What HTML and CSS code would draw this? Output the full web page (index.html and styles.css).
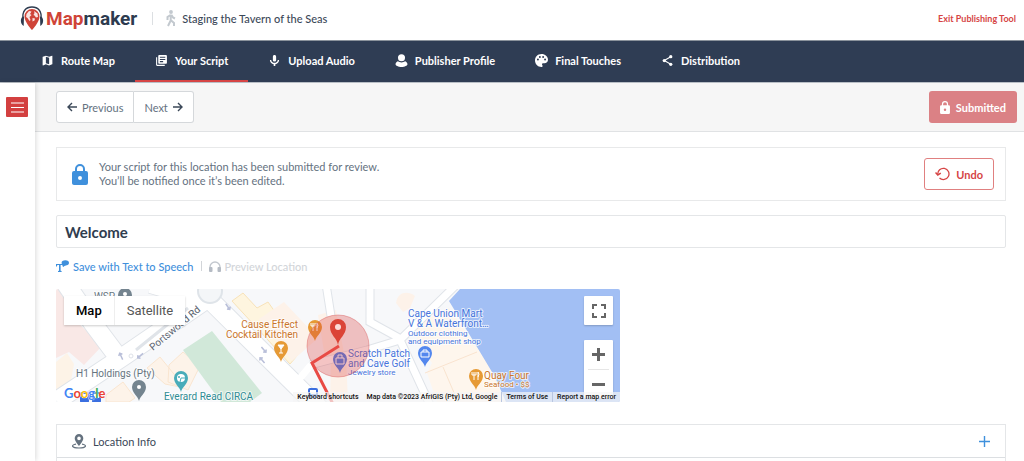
FILE: index.html
```html
<!DOCTYPE html>
<html lang="en">
<head>
    <meta charset="UTF-8">
    <meta name="viewport" content="width=device-width, initial-scale=1.0">
    <title>Mapmaker - Your Script</title>
    <link rel="stylesheet" href="styles.css">
</head>
<body>
    <header class="header">
        <a class="logo" href="#">
            <svg width="24" height="25" viewBox="0 0 24 25" aria-hidden="true">
                <path d="M3 13C2 5 6 1 12 1s10 4 9 12" fill="none" stroke="#2d3b4f" stroke-width="1.3"/>
                <path d="M4 10.500C0 10.500-.3 18 3.700 20zM20 10.500c4 0 4.300 7.500.300 9.500z" fill="#2d3b4f"/>
                <path d="M12 3a7.500 7.500 0 0 0-7.500 7.700C4.500 16 12 24 12 24s7.500-8 7.500-13.300A7.500 7.500 0 0 0 12 3z" fill="#cf4438"/>
                <path d="M6.500 8 9 5l2.500.5L10 8l1.500 1-2 2 1 3-1 1-2-3-1.500-1zM14 5l3.500 2.500L18 11l-2 .5-1.500-2-1-.5 1-2zM12.500 12l2.500.5-.5 2-2 1z" fill="#fff" opacity=".85"/>
            </svg>
            <span class="logo-text"><span class="logo-red">Map</span>maker</span>
        </a>
        <span class="header-sep"></span>
        <svg class="walker" width="10" height="17" viewBox="0 0 10 17" aria-hidden="true">
            <circle cx="5" cy="2" r="1.900" fill="#c3c9cf"/>
            <path d="M4.700 4.500v6L2 16M5.200 10.500 8 13v3M4.500 5 1.500 7v3M5.500 5 7 7.500l2 1" fill="none" stroke="#c3c9cf" stroke-width="2"/>
        </svg>
        <span class="tour-name">Staging the Tavern of the Seas</span>
        <a class="exit" href="#">Exit Publishing Tool</a>
    </header>

    <nav class="tabs">
        <a class="tab" href="#">
            <svg viewBox="0 0 24 24"><path d="M20.500 3l-.2 0L15 5.100 9 3 3.400 4.900c-.2.100-.4.300-.4.500v15.100c0 .3.200.5.500.5l.2 0L9 18.900l6 2.100 5.600-1.900c.2-.1.400-.3.400-.5V3.500c0-.3-.2-.5-.5-.5zM15 19l-6-2.100V5l6 2.100V19z"/></svg>
            Route Map
        </a>
        <a class="tab active" href="#">
            <svg viewBox="0 0 24 24"><path d="M4 6H2v14c0 1.100.9 2 2 2h14v-2H4V6zm16-4H8c-1.100 0-2 .9-2 2v12c0 1.100.9 2 2 2h12c1.100 0 2-.9 2-2V4c0-1.100-.9-2-2-2zm-1 9H9V9h10v2zm-4 4H9v-2h6v2zm4-8H9V5h10v2z"/></svg>
            Your Script
        </a>
        <a class="tab" href="#">
            <svg viewBox="0 0 24 24"><path d="M12 14c1.700 0 3-1.300 3-3V5c0-1.700-1.300-3-3-3S9 3.300 9 5v6c0 1.700 1.300 3 3 3zm6-3h2.500c0 4-3 7-7 7.700V22h-3v-3.300c-4-.7-7-3.700-7-7.700H6c0 3 3 5.300 6 5.300s6-2.300 6-5.300z"/></svg>
            Upload Audio
        </a>
        <a class="tab" href="#">
            <svg viewBox="0 0 24 24"><circle cx="12" cy="7" r="6.500"/><path d="M5 13.500c4 2.800 10 2.800 14 0 3 1.500 4 3.500 4 5.500 0 2.500-5 5-11 5S1 21.500 1 19c0-2 1-4 4-5.500z"/></svg>
            Publisher Profile
        </a>
        <a class="tab" href="#">
            <svg viewBox="2 2 20 20"><path d="M12 2C6 2 2 6.500 2 12s4.500 10 10 10c1 0 1.700-.8 1.700-1.700 0-.4-.2-.8-.4-1.100-.3-.3-.5-.7-.5-1.100 0-1 .8-1.700 1.700-1.700h2c3 0 5.500-2.500 5.500-5.500C22 5.900 17.500 2 12 2zM6.500 12a1.500 1.500 0 1 1 0-3 1.500 1.500 0 0 1 0 3zm3-4a1.500 1.500 0 1 1 0-3 1.500 1.500 0 0 1 0 3zm5 0a1.500 1.500 0 1 1 0-3 1.500 1.500 0 0 1 0 3zm3 4a1.500 1.500 0 1 1 0-3 1.500 1.500 0 0 1 0 3z"/></svg>
            Final Touches
        </a>
        <a class="tab" href="#">
            <svg viewBox="0 0 24 24"><path d="M18 5 6 12l12 7" fill="none" stroke="#fff" stroke-width="2"/><circle cx="18" cy="5" r="3"/><circle cx="6" cy="12" r="3"/><circle cx="18" cy="19" r="3"/></svg>
            Distribution
        </a>
    </nav>

    <div class="layout">
        <aside class="sidebar">
            <button class="menu-btn" aria-label="Open menu">
                <svg width="13" height="11" viewBox="0 0 13 11"><path d="M0 1h13M0 5.500h13M0 10h13" stroke="#fff" stroke-width="1.200"/></svg>
            </button>
        </aside>

        <main class="main">
            <div class="toolbar">
                <div class="pager">
                    <button class="pager-btn">
                        <svg width="10" height="10" viewBox="0 0 10 10"><path d="M10 5H1M5 1 1 5l4 4" fill="none" stroke="#3b4858" stroke-width="1.400"/></svg>
                        Previous
                    </button>
                    <button class="pager-btn">
                        Next
                        <svg width="10" height="10" viewBox="0 0 10 10"><path d="M0 5h9M5 1l4 4-4 4" fill="none" stroke="#3b4858" stroke-width="1.400"/></svg>
                    </button>
                </div>
                <button class="submitted" disabled>
                    <svg width="10" height="13" viewBox="0 0 16 21"><path d="M14 7h-1V5A5 5 0 0 0 3 5v2H2a2 2 0 0 0-2 2v10c0 1.100.9 2 2 2h12a2 2 0 0 0 2-2V9a2 2 0 0 0-2-2zm-6 9a2 2 0 1 1 0-4 2 2 0 0 1 0 4zm3-9H5V5a3 3 0 0 1 6 0v2z" fill="#fff"/></svg>
                    Submitted
                </button>
            </div>

            <div class="content">
                <section class="notice">
                    <svg width="16" height="21" viewBox="0 0 16 21"><path d="M14 7h-1V5A5 5 0 0 0 3 5v2H2a2 2 0 0 0-2 2v10c0 1.100.9 2 2 2h12a2 2 0 0 0 2-2V9a2 2 0 0 0-2-2zm-6 9a2 2 0 1 1 0-4 2 2 0 0 1 0 4zm3-9H5V5a3 3 0 0 1 6 0v2z" fill="#3f90dc"/></svg>
                    <p class="notice-text">Your script for this location has been submitted for review.<br>You’ll be notified once it’s been edited.</p>
                    <button class="undo">
                        <svg width="15" height="14" viewBox="0 0 15 14"><path d="M2.800 7.500a5.600 5.600 0 1 1 1.700 3.500" fill="none" stroke="#d64545" stroke-width="1.300"/><path d="M.5 5.500 2.800 8l3-1.800" fill="none" stroke="#d64545" stroke-width="1.500"/></svg>
                        Undo
                    </button>
                </section>

                <input class="title-input" type="text" value="Welcome" aria-label="Location title">

                <div class="actions">
                    <button class="action">
                        <svg width="13" height="12" viewBox="0 0 13 12"><path d="M0 4h7.500v2.500H6.700L6.300 5H4.600v5.800l1 .2v1H2v-1l1-.2V5H1.300L.9 6.500H0z" fill="#3f90dc"/><ellipse cx="9.300" cy="2.800" rx="3.700" ry="2.600" fill="#3f90dc"/><path d="M7 4v3l3-2z" fill="#3f90dc"/></svg>
                        Save with Text to Speech
                    </button>
                    <span class="action-sep"></span>
                    <button class="action muted" disabled>
                        <svg width="12" height="11" viewBox="0 0 12 11"><path d="M1 9V6a5 5 0 0 1 10 0v3" fill="none" stroke="#c2c7ce" stroke-width="1.300"/><rect y="6" width="3.500" height="5" rx="1" fill="#b5bbc4"/><rect x="8.500" y="6" width="3.500" height="5" rx="1" fill="#b5bbc4"/></svg>
                        Preview Location
                    </button>
                </div>

                <div class="map">
                    <svg class="map-canvas" viewBox="0 0 564 113" preserveAspectRatio="xMinYMin slice">
                        <defs>
                            <path id="pin" d="M0 0C-1-5-7-8-7-14a7 7 0 0 1 14 0C7-8 1-5 0 0z"/>
                            <path id="arrow" d="M0 4V-3M-2-1l2-2 2 2" fill="none" stroke="#b9bfd9" stroke-width="1.500"/>
                        </defs>
                        <rect width="564" height="113" fill="#f7f8fa"/>

                        <!-- buildings and areas -->
                        <path d="M0 0h8l10 30 28 27-18 19-15-13-13 6z" fill="#f9e8e6"/>
                        <path d="M0 73l11-9 7 11-3 17-15 9z" fill="#fdf3e7"/>
                        <path d="M91 79l13-11 18 22 2 8-15-3zM113 76l14-13 17 14-12 24-20-8zM50 106l17-13 12 16-6 4H50z" fill="#fdf3e9" stroke="#f9e5d0"/>
                        <path d="M127 61l29-19 50 62-12 9h-29z" fill="#d1e8d9"/>
                        <path d="M176 12l11-8 14 15 11-6 34 48-12 14z" fill="#fef5df" stroke="#f7e2b8"/>
                        <path d="M203 30l25-17 34 36-26 23zM262 26l18-5 8 43-19 5zM275 68l15-2 2 47h-18z" fill="#fdf2e9"/>
                        <path d="M340 14c2-12 12-12 19-7l-5 12-7 4z" fill="#fdf2e9"/>
                        <path d="M361 35l32-16 32 45 16 24 5 25h-65l-10-29 5-10-15-22z" fill="#fef6ed"/>
                        <path d="M369 84l52-21M387 78l15 35" stroke="#f9e3cf" fill="none"/>
                        <path d="M404 0l-11 12 31 51 15 25 11 25h114V0z" fill="#a2bff4"/>

                        <!-- roads: grey edge, white body -->
                        <g fill="none" stroke="#e0e4e9">
                            <path d="M-10 119 68 67 154 8M10-5 38 36l30 40M150 7l114 113M95-5l55 16" stroke-width="20"/>
                            <path d="M314-5v38l31 17M254 76l57-15 33-10 55-54M344 51l30 65M270-5l5 32" stroke-width="9"/>
                        </g>
                        <g fill="none" stroke="#fff">
                            <path d="M-10 119 68 67 154 8M10-5 38 36l30 40M150 7l114 113M95-5l55 16" stroke-width="18"/>
                            <path d="M314-5v38l31 17M254 76l57-15 33-10 55-54M344 51l30 65M270-5l5 32M235 100l20-24" stroke-width="7"/>
                        </g>
                        <circle cx="154" cy="2" r="12" fill="#f4f6f8" stroke="#dfe4e9" stroke-width="2"/>
                        <path d="M80 61 132 19" stroke="#e0e4e9" stroke-width="3"/>
                        <circle cx="75" cy="67" r="2" fill="none" stroke="#dde1e8"/>
                        <use href="#arrow" transform="translate(65 67) rotate(-25)"/>
                        <use href="#arrow" transform="translate(84 67) rotate(-130)"/>
                        <use href="#arrow" transform="translate(172 18) rotate(145)"/>
                        <use href="#arrow" transform="translate(208 61) rotate(140)"/>
                        <use href="#arrow" transform="translate(206 71) rotate(-40)"/>

                        <!-- transit stops -->
                        <g fill="#3b6fe0">
                            <rect x="24" y="103" width="9" height="11" rx="2"/>
                            <rect x="36" y="103" width="9" height="11" rx="2"/>
                            <rect x="252" y="99" width="10" height="10" rx="2"/>
                        </g>
                        <path d="M26 105h5v4h-5zM38 105h5v4h-5zM254 101h6v4h-6z" fill="#fff"/>

                        <g class="label big">
                            <text x="38" y="11" fill="#66757f">WSP</text>
                            <text x="20" y="88" fill="#66757f">H1 Holdings (Pty)</text>
                            <text x="108" y="111" fill="#2f8c94">Everard Read CIRCA</text>
                            <text x="242" y="39" text-anchor="end" fill="#ca762b">Cause Effect</text>
                            <text x="242" y="49" text-anchor="end" fill="#ca762b">Cocktail Kitchen</text>
                            <text x="292" y="68" fill="#4775dc">Scratch Patch</text>
                            <text x="292" y="78" fill="#4775dc">and Cave Golf</text>
                            <text x="352" y="28" fill="#4775dc">Cape Union Mart</text>
                            <text x="352" y="38" fill="#4775dc">V &amp; A Waterfront…</text>
                            <text x="428" y="90" fill="#ca762b">Quay Four</text>
                            <text transform="translate(97 62) rotate(-40)" fill="#5b6470">Portswood Rd</text>
                        </g>
                        <g class="label small">
                            <text x="292" y="86" fill="#4775dc">Jewelry store</text>
                            <text x="352" y="47" fill="#4775dc">Outdoor clothing</text>
                            <text x="352" y="55" fill="#4775dc">and equipment shop</text>
                            <text x="428" y="98" fill="#ca762b">Seafood • $$</text>
                        </g>

                        <!-- places -->
                        <g class="place">
                            <use href="#pin" x="69" y="20" fill="#74848f"/><circle cx="69" cy="5" r="2" fill="#fff"/>
                            <use href="#pin" x="83" y="112" fill="#74848f"/><circle cx="83" cy="98" r="2" fill="#fff"/>
                            <use href="#pin" x="125" y="103" fill="#49acb9"/><circle cx="125" cy="89" r="4" fill="#fff"/><path d="M124 93l1-4h4" stroke="#49acb9" fill="none"/><circle cx="123" cy="88" r="1" fill="#49acb9"/>
                            <use href="#pin" x="225" y="73" fill="#e69a35"/><path d="M222 56h6l-3 4zM225 60v4m-2 0h4" stroke="#fff" fill="#fff"/>
                            <use href="#pin" x="259" y="52" fill="#e69a35"/><path d="M257 34v8M255 34v3h4v-3M261 34v8m0-8q2 2 0 5" stroke="#fff" fill="none"/>
                            <use href="#pin" x="284" y="84" fill="#4a7fe8"/><path d="M280 69h8v6h-8zM282 69v-3h4v3" stroke="#fff" fill="none"/>
                            <use href="#pin" x="369" y="78" fill="#5387ee"/><path d="M365 63h8v5h-8zM367 63v-2h4v2" stroke="#fff" fill="none"/>
                            <use href="#pin" x="420" y="101" fill="#e69a35"/><path d="M418 83v8M416 83v3h4v-3M422 83v8m0-8q2 2 0 5" stroke="#fff" fill="none"/>
                        </g>

                        <!-- tour location -->
                        <circle cx="282" cy="57" r="31" fill="#dc3c3c" fill-opacity=".3" stroke="#d65353" stroke-opacity=".4"/>
                        <path d="M283 57 256 74 278 117" fill="none" stroke="#e84b46" stroke-width="3"/>
                        <path d="M282 56C281 49 274 46 274 38a8 8 0 0 1 16 0C290 46 283 49 282 56z" fill="#db4437"/>
                        <circle cx="282" cy="38" r="3" fill="#fbdcd8"/>
                    </svg>

                    <div class="map-type">
                        <button class="map-type-btn selected">Map</button>
                        <button class="map-type-btn">Satellite</button>
                    </div>
                    <button class="map-full" aria-label="Toggle fullscreen">
                        <svg width="14" height="14" viewBox="0 0 14 14"><path d="M1 5V1h4M9 1h4v4M13 9v4H9M5 13H1V9" fill="none" stroke="#666" stroke-width="2"/></svg>
                    </button>
                    <div class="map-zoom">
                        <button class="zoom-btn" aria-label="Zoom in"><svg width="13" height="13" viewBox="0 0 13 13"><path d="M0 6.500h13M6.500 0v13" stroke="#666" stroke-width="3"/></svg></button>
                        <button class="zoom-btn" aria-label="Zoom out"><svg width="13" height="13" viewBox="0 0 13 13"><path d="M0 6.500h13" stroke="#666" stroke-width="3"/></svg></button>
                    </div>
                    <span class="google"><span class="g-blue">G</span><span class="g-red">o</span><span class="g-yellow">o</span><span class="g-blue">g</span><span class="g-green">l</span><span class="g-red">e</span></span>
                    <div class="map-footer">
                        <button class="map-credit">Keyboard shortcuts</button>
                        <span class="map-credit">Map data ©2023 AfriGIS (Pty) Ltd, Google</span>
                        <a class="map-credit" href="#">Terms of Use</a>
                        <a class="map-credit" href="#">Report a map error</a>
                    </div>
                </div>

                <div class="accordion">
                    <button class="accordion-row">
                        <svg width="14" height="15" viewBox="0 0 14 15"><path d="M7 0a4.300 4.300 0 0 0-4.300 4.300C2.700 7.500 7 12 7 12s4.300-4.500 4.300-7.700A4.300 4.300 0 0 0 7 0zm0 6.200a1.800 1.800 0 1 1 0-3.600 1.800 1.800 0 0 1 0 3.600z" fill="#65727f"/><path d="M4 10.200C-1.500 11-.5 14 7 14s8.500-3 3-3.800" fill="none" stroke="#65727f" stroke-width="1.200"/></svg>
                        Location Info
                        <svg class="plus" width="11" height="11" viewBox="0 0 11 11"><path d="M0 5.500h11M5.500 0v11" stroke="#3f90dc" stroke-width="1.400"/></svg>
                    </button>
                    <div class="accordion-row"></div>
                </div>
            </div>
        </main>
    </div>
</body>
</html>
```
FILE: styles.css
```css
* {
    box-sizing: border-box;
}
body {
    margin: 0;
    height: 100vh;
    display: flex;
    flex-direction: column;
    overflow: hidden;
    background: #fff;
    color: #3b4858;
    font-family: Lato, sans-serif;
    font-size: 11px;
}
a {
    color: inherit;
    text-decoration: none;
}
button {
    font: inherit;
    color: inherit;
    background: none;
    border: 0;
    padding: 0;
    cursor: pointer;
}
svg {
    flex: none;
}

/* Header */
.header {
    display: flex;
    align-items: center;
    height: 41px;
    padding: 0 8px 3px 20px;
    border-bottom: 1px solid #8b939c;
    flex: none;
}
.logo {
    display: flex;
    align-items: center;
    gap: 2px;
}
.logo-text {
    font-family: Roboto, sans-serif;
    font-size: 19px;
    line-height: 24px;
    font-weight: 700;
    color: #2d3b4f;
}
.logo-red {
    color: #cf4438;
}
.header-sep {
    width: 1px;
    height: 13px;
    margin: 0 13px 0 15px;
    background: #dcdfe2;
}
.tour-name {
    margin-left: 6px;
    font-weight: 500;
}
.exit {
    margin-left: auto;
    font-size: 9px;
    font-weight: 700;
    color: #d64545;
}

/* Navigation */
.tabs {
    display: flex;
    height: 42px;
    padding-left: 21px;
    background: #2f3d54;
    border-bottom: 1px solid #b9bfc6;
    flex: none;
}
.tab {
    display: flex;
    align-items: center;
    gap: 7px;
    padding: 0 20px;
    color: #fff;
    font-weight: 700;
    border-bottom: 2px solid transparent;
}
.tab svg {
    width: 13px;
    height: 13px;
    fill: #fff;
}
.tab.active {
    border-bottom-color: #d64545;
}

.layout {
    display: flex;
    flex: 1;
    min-height: 0;
}
.sidebar {
    width: 35px;
    flex: none;
    padding: 14px 6px;
    background: #fff;
    box-shadow: 1px 0 5px rgba(0, 0, 0, 0.15);
    z-index: 1;
}
.menu-btn {
    display: flex;
    align-items: center;
    justify-content: center;
    width: 22px;
    height: 20px;
    border-radius: 1px;
    background: #d34040;
}
.main {
    flex: 1;
    min-width: 0;
    overflow: hidden;
}

/* Toolbar */
.toolbar {
    display: flex;
    justify-content: space-between;
    align-items: center;
    height: 49px;
    padding: 0 7px 0 21px;
    background: #f6f6f6;
    border-bottom: 1px solid #e0e2e4;
}
.pager {
    display: flex;
}
.pager-btn {
    display: flex;
    align-items: center;
    gap: 5px;
    height: 32px;
    padding: 0 10px;
    background: #fff;
    border: 1px solid #d5d8db;
    color: #65727f;
}
.pager-btn:first-child {
    border-radius: 3px 0 0 3px;
}
.pager-btn:last-child {
    border-left: 0;
    border-radius: 0 3px 3px 0;
}
.submitted {
    display: flex;
    align-items: center;
    gap: 6px;
    height: 32px;
    padding: 0 11px;
    border-radius: 3px;
    background: #db8185;
    color: #fff;
    font-weight: 700;
}

.content {
    padding: 15px 18px 0 21px;
}

/* Submission notice */
.notice {
    display: flex;
    align-items: center;
    gap: 11px;
    height: 54px;
    padding: 0 11px 0 15px;
    border: 1px solid #e8e9ea;
}
.notice-text {
    margin: 0;
    line-height: 14px;
    color: #65727f;
}
.undo {
    display: flex;
    align-items: center;
    gap: 6px;
    height: 32px;
    margin-left: auto;
    padding: 0 10px;
    border: 1px solid #e08080;
    border-radius: 3px;
    color: #d64545;
    font-weight: 700;
}

.title-input {
    display: block;
    width: 100%;
    height: 33px;
    margin-top: 14px;
    padding: 0 8px;
    border: 1px solid #e4e6e8;
    border-radius: 2px;
    font: 700 15px Lato, sans-serif;
    color: #2f3d4f;
}

.actions {
    display: flex;
    align-items: center;
    height: 14px;
    margin-top: 11px;
}
.action {
    display: flex;
    align-items: center;
    gap: 4px;
    color: #3f90dc;
    font-weight: 500;
}
.action.muted {
    color: #d2d5d9;
}
.action-sep {
    width: 1px;
    height: 10px;
    margin: 0 7px;
    background: #d2d5d9;
}

/* Map */
.map {
    position: relative;
    max-width: 564px;
    height: 113px;
    margin-top: 16px;
    overflow: hidden;
    border-radius: 2px;
    font-family: Roboto, sans-serif;
}
.map-canvas {
    display: block;
    width: 100%;
    height: 100%;
}
.label text {
    stroke: #fff;
    stroke-width: 2px;
    stroke-linejoin: round;
    stroke-opacity: 0.7;
    paint-order: stroke;
}
.big {
    font-size: 10px;
}
.small {
    font-size: 8px;
}
.map-type {
    position: absolute;
    top: 7px;
    left: 8px;
    display: flex;
    background: #fff;
    box-shadow: 0 1px 2px rgba(0, 0, 0, 0.2);
}
.map-type-btn {
    height: 29px;
    padding: 0 12px;
    font-size: 13px;
    color: #565656;
}
.map-type-btn.selected {
    color: #000;
    font-weight: 500;
    border-right: 1px solid #eee;
}
.map-full,
.map-zoom {
    position: absolute;
    right: 7px;
    width: 29px;
    background: #fff;
    border-radius: 1px;
    box-shadow: 0 1px 2px rgba(0, 0, 0, 0.2);
}
.map-full {
    top: 7px;
    height: 29px;
    display: flex;
    align-items: center;
    justify-content: center;
}
.map-zoom {
    top: 51px;
}
.zoom-btn {
    display: flex;
    align-items: center;
    justify-content: center;
    width: 21px;
    height: 29px;
    margin: 0 4px;
}
.zoom-btn + .zoom-btn {
    border-top: 1px solid #e6e6e6;
}
.google {
    position: absolute;
    left: 8px;
    bottom: 1px;
    font-family: Lato, sans-serif;
    font-size: 13px;
    line-height: 16px;
    font-weight: 700;
    text-shadow: 0 0 1px #fff, 0 0 1px #fff;
}
.g-blue {
    color: #4285f4;
}
.g-red {
    color: #ea4335;
}
.g-yellow {
    color: #fbbc05;
}
.g-green {
    color: #34a853;
}
.map-footer {
    position: absolute;
    right: 0;
    bottom: 0;
    display: flex;
    font-size: 7px;
    line-height: 10px;
    font-weight: 500;
    color: #111;
}
.map-credit {
    padding: 0 4px;
    background: rgba(245, 245, 245, 0.7);
}
a.map-credit {
    border-left: 1px solid #b9c6e0;
}

/* Accordion */
.accordion {
    margin-top: 22px;
    border: 1px solid #e4e6e8;
}
.accordion-row {
    display: flex;
    align-items: center;
    gap: 7px;
    width: 100%;
    height: 32px;
    padding: 0 15px;
}
.accordion-row + .accordion-row {
    border-top: 1px solid #dcdfe2;
}
.plus {
    margin-left: auto;
}
```
